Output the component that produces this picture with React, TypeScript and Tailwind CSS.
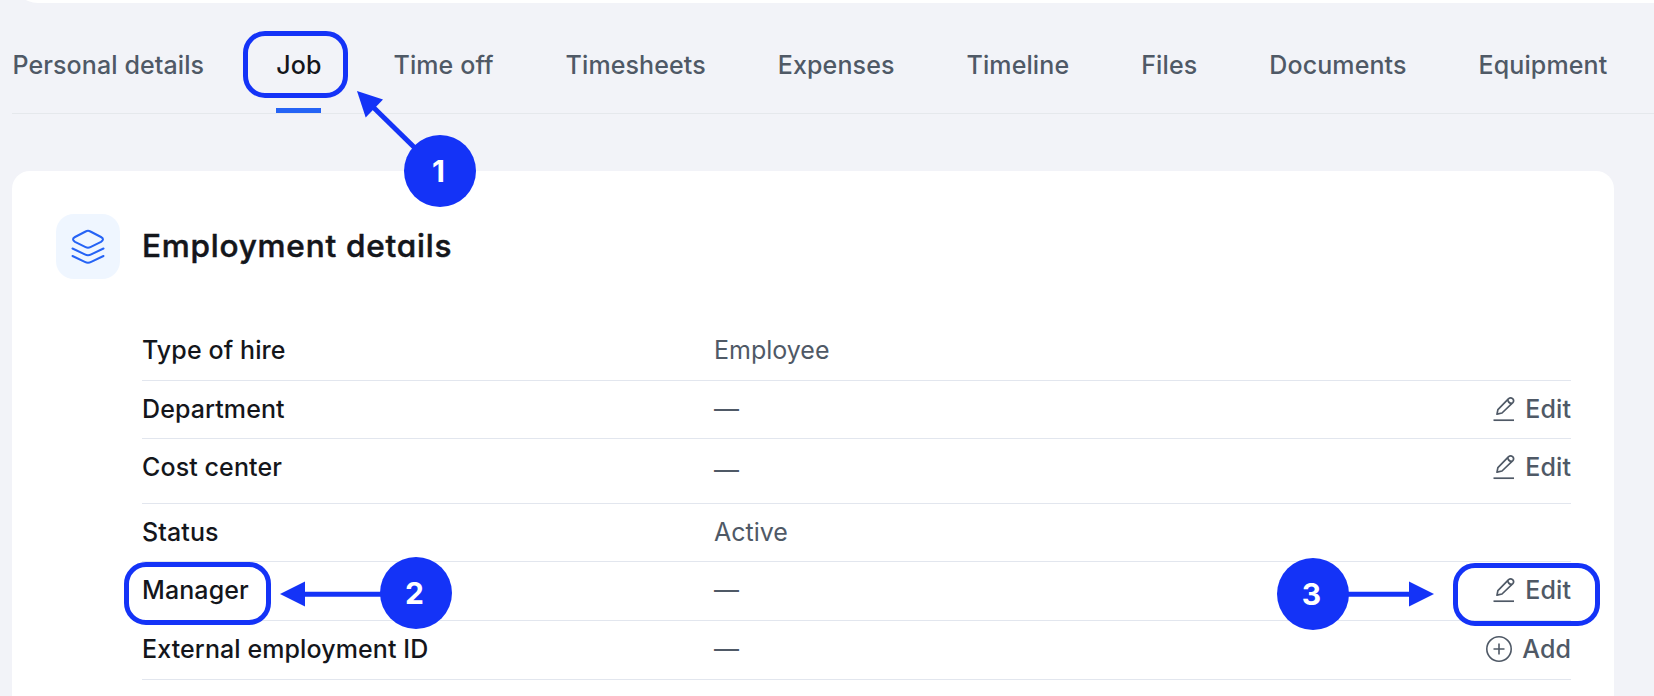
import React from 'react';

const tabs = [
  { label: 'Personal details' },
  { label: 'Job', active: true },
  { label: 'Time off' },
  { label: 'Timesheets' },
  { label: 'Expenses' },
  { label: 'Timeline' },
  { label: 'Files' },
  { label: 'Documents' },
  { label: 'Equipment' },
];

const rows = [
  { label: 'Type of hire', value: 'Employee', height: 'h-[59px]' },
  { label: 'Department', value: '—', action: 'Edit', height: 'h-[58px]' },
  { label: 'Cost center', value: '—', action: 'Edit', height: 'h-[65px]', valueClass: 'pt-[3px]' },
  { label: 'Status', value: 'Active', height: 'h-[58px]' },
  { label: 'Manager', value: '—', action: 'Edit', height: 'h-[59px]' },
  { label: 'External employment ID', value: '—', action: 'Add', height: 'h-[59px]' },
];

function LayersIcon() {
  return (
    <svg width="34" height="36" viewBox="0 0 34 36" fill="none" stroke="#2563f5" strokeWidth="2" strokeLinecap="round" strokeLinejoin="round">
      <path d="M14.6 2.5Q17 1.2 19.4 2.5L30 8Q34 10.2 30 12.8L19.4 18.2Q17 19.4 14.6 18.2L4 12.8Q0 10.2 4 8Z" />
      <path d="M1.5 19.5L13.8 25.4Q17 27 20.2 25.4L32.5 19.5" />
      <path d="M1.5 27L13.8 32.9Q17 34.4 20.2 32.9L32.5 27" />
    </svg>
  );
}

function EditIcon() {
  return (
    <svg width="22" height="26" viewBox="0 0 22 26" fill="none" stroke="currentColor" strokeWidth="1.7" strokeLinejoin="round">
      <path d="M4 18.2L4.9 13.6L15.6 2.6Q17.6 1 19.6 2.6Q21.5 4.6 19.8 6.6L9 17Z" />
      <path d="M14.8 3.6Q15 7 18.8 7.4" />
      <path d="M0.5 24.2H21" />
    </svg>
  );
}

function AddIcon() {
  return (
    <svg width="26" height="26" viewBox="0 0 26 26" fill="none" stroke="currentColor" strokeWidth="1.6">
      <circle cx="13" cy="13" r="12.2" />
      <path d="M13 7.5V18.5M7.5 13H18.5" />
    </svg>
  );
}

function Step({ children, className }: { children: React.ReactNode; className: string }) {
  return (
    <div className={`absolute flex size-[72px] items-center justify-center rounded-full bg-[#1433f7] pr-[3px] text-[30px] font-bold leading-none text-white ${className}`}>
      {children}
    </div>
  );
}

function Highlight({ className }: { className: string }) {
  return <div className={`absolute rounded-[22px] border-5 border-[#1433f7] ${className}`} />;
}

export default function App() {
  return (
    <div className="relative h-[696px] w-[1654px] overflow-hidden bg-[#f2f3f8] font-['Inter',sans-serif] text-[25px] text-[#4f5966]">
      <div className="ml-3 h-[3px] overflow-hidden">
        <div className="-mt-[60px] h-[63px] rounded-bl-[26px] bg-white" />
      </div>

      <nav className="ml-3 flex h-[111px] gap-[72px] border-b border-[#e5e8ec] pl-[0.4px] font-medium tracking-[0.11px] whitespace-nowrap">
        {tabs.map(tab => (
          <div
            key={tab.label}
            className={tab.active ? 'h-[110px] border-b-5 border-[#2563f5] pt-[47px] leading-[30px] text-[#14161b]' : 'pt-[47px] leading-[30px]'}
          >
            {tab.label}
          </div>
        ))}
      </nav>

      <section className="mt-[57px] ml-3 h-[560px] w-[1602px] rounded-[18px] bg-white pt-[43px] pr-[43px] pl-11">
        <div className="flex items-center">
          <div className="flex h-[65px] w-16 items-center justify-center rounded-[18px] bg-[#eff6ff]">
            <LayersIcon />
          </div>
          <h2 className="-mt-0.5 ml-[22px] text-[31.5px] leading-10 font-medium tracking-[0.78px] text-[#14161b] [-webkit-text-stroke:0.5px] [font-feature-settings:'cv11']">Employment details</h2>
        </div>

        <div className="mt-[43px] ml-[86px]">
          {rows.map(row => (
            <div key={row.label} className={`flex border-b border-[#e2e6ee] pt-[13px] leading-[30px] ${row.height}`}>
              <div className="w-[572px] font-medium tracking-[0.1px] text-[#14161b]">{row.label}</div>
              <div className={`flex-1 ${row.valueClass ?? ''}`}>{row.value}</div>
              {row.action && (
                <div className="flex h-[30px] items-center gap-2.5 font-medium tracking-[0.1px]">
                  {row.action === 'Edit' ? <EditIcon /> : <AddIcon />}
                  {row.action}
                </div>
              )}
            </div>
          ))}
        </div>
      </section>

      <Highlight className="top-[31px] left-[243px] h-[67px] w-[105px]" />
      <Highlight className="top-[562px] left-[124px] h-[63px] w-[147px]" />
      <Highlight className="top-[563px] left-[1453px] h-[63px] w-[147px]" />

      <svg className="absolute top-[91px] left-[357px]" width="62" height="60" fill="#1433f7" stroke="#1433f7">
        <path d="M14 14L60 59" strokeWidth="5" />
        <path d="M0 0L26 8.5L8.7 26.5Z" stroke="none" />
      </svg>
      <svg className="absolute top-[581px] left-[280px]" width="110" height="26" fill="#1433f7" stroke="#1433f7">
        <path d="M20 13.3H110" strokeWidth="5" />
        <path d="M0 13L25 0.5V25.5Z" stroke="none" />
      </svg>
      <svg className="absolute top-[581px] left-[1340px]" width="94" height="26" fill="#1433f7" stroke="#1433f7">
        <path d="M0 13.3H75" strokeWidth="5" />
        <path d="M94 13L69 0.5V25.5Z" stroke="none" />
      </svg>

      <Step className="top-[135px] left-[404px]">1</Step>
      <Step className="top-[557px] left-[380px]">2</Step>
      <Step className="top-[558px] left-[1277px]">3</Step>
    </div>
  );
}
